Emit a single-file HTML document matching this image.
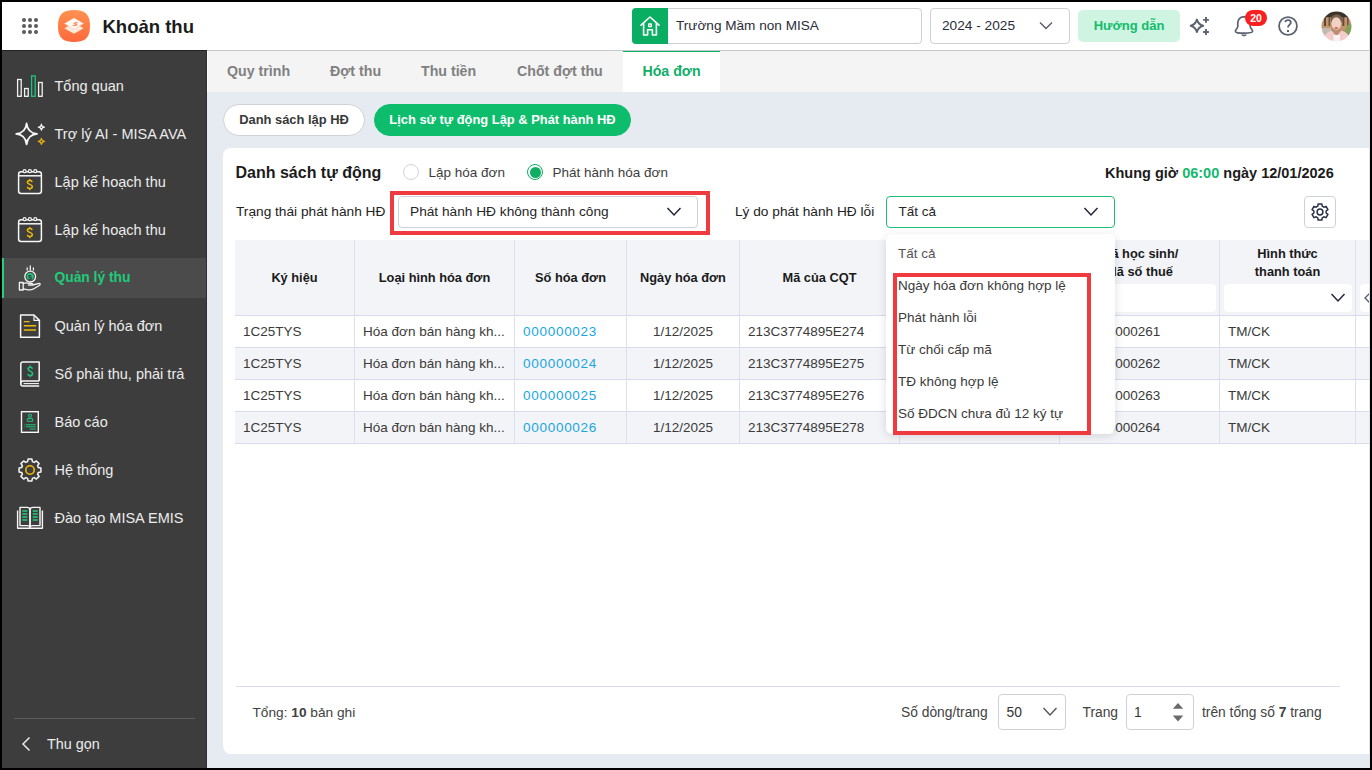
<!DOCTYPE html>
<html><head><meta charset="utf-8">
<style>
*{box-sizing:border-box;margin:0;padding:0}
html,body{width:1372px;height:770px;overflow:hidden;background:#000;font-family:"Liberation Sans",sans-serif;color:#222}
.abs{position:absolute}
#app{position:absolute;left:0;top:0;width:1372px;height:770px;background:#e6eaf1;overflow:hidden}
#frame{position:absolute;left:0;top:0;width:1372px;height:770px;border:2px solid #000;z-index:100}
/* header */
#hdr{position:absolute;left:0;top:0;width:1372px;height:51px;background:#fff;border-bottom:1px solid #c6cad0}
/* sidebar */
#side{position:absolute;left:0;top:50px;width:207px;height:720px;background:#3d3d3d;border-right:1px solid #2f2f2f;border-top:1px solid #232323}
.si{position:absolute;left:0;width:206px;height:40px;color:#ececec;font-size:14.5px;line-height:40px}
.si span{position:absolute;left:54.5px;top:0}
.si svg{position:absolute}
.si.act{background:#4b4b4b;color:#1fcb7a;font-weight:700;font-size:13.8px}
.si.act:before{content:"";position:absolute;left:2px;top:0;width:2px;height:40px;background:#1fd17f}
/* tabs */
#tabs{position:absolute;left:207px;top:51px;width:1165px;height:41px;background:#f4f4f4;border-left:1px solid #fff}
.tab{position:absolute;top:0;height:41px;line-height:41px;font-size:14.2px;font-weight:700;color:#808080}
.tab.act{background:#fff;color:#12ad68;border-top:1.5px solid #0aae62;line-height:39.5px}
.pill{position:absolute;top:104px;height:32px;border-radius:16px;font-size:12.9px;font-weight:700;line-height:30px;text-align:center}
#card{position:absolute;left:223px;top:148px;width:1170px;height:606px;background:#fff;border-radius:8px}
.txt{position:absolute;white-space:nowrap}

.t{position:absolute;white-space:nowrap}
.box{position:absolute;background:#fff;border:1px solid #cfd1d8;border-radius:4px}
.th{position:absolute;top:240px;height:75px;font-size:12.8px;font-weight:700;color:#1a1a1a;text-align:center;line-height:76px}
.vl{position:absolute;top:240px;width:1px;height:203px;background:#dcdfee}
.hl{position:absolute;left:235px;width:1140px;height:1px;background:#d8dbeb}
.row{position:absolute;left:235px;width:1140px;height:32px}
.c{position:absolute;height:32px;line-height:34px;font-size:13.5px;color:#3a3a3a;white-space:nowrap}
.dd{position:absolute;left:898px;font-size:13.5px;color:#3a3a3a;line-height:32px;height:32px;white-space:nowrap}
</style></head><body>
<div id="app">
  <div id="hdr">
    <!-- app grid -->
    <svg class="abs" style="left:22px;top:18px" width="16" height="16" viewBox="0 0 16 16" fill="#5a5a5a">
      <circle cx="2" cy="2" r="2"/><circle cx="8" cy="2" r="2"/><circle cx="14" cy="2" r="2"/>
      <circle cx="2" cy="8" r="2"/><circle cx="8" cy="8" r="2"/><circle cx="14" cy="8" r="2"/>
      <circle cx="2" cy="14" r="2"/><circle cx="8" cy="14" r="2"/><circle cx="14" cy="14" r="2"/>
    </svg>
    <!-- logo -->
    <svg class="abs" style="left:58px;top:10px" width="32" height="32" viewBox="0 0 32 32">
      <defs><linearGradient id="lg" x1="0" y1="0" x2="0" y2="1"><stop offset="0" stop-color="#ff9252"/><stop offset="1" stop-color="#ff6839"/></linearGradient></defs>
      <path d="M16 0C27.5 0 32 4.5 32 16S27.5 32 16 32 0 27.5 0 16 4.5 0 16 0Z" fill="url(#lg)"/>
      <path d="M16 12.6 L25.6 18.2 L16 23.8 L6.4 18.2Z" fill="#ffeadd"/>
      <path d="M16 8 L25.6 13.4 L16 18.8 L6.4 13.4Z" fill="#fffaf6"/>
      <path d="M6.4 13.6 L16 19.2 L25.6 13.6" fill="none" stroke="#ffd2b8" stroke-width="0.5"/>
      <text x="0" y="0" font-size="7.5" font-weight="700" font-family="Liberation Sans" fill="#ff7a3a" transform="translate(16.6 16.2) skewX(-25) scale(1.1 0.75)" text-anchor="middle">$</text>
    </svg>
    <div class="txt" style="left:102.5px;top:3px;line-height:48px;font-size:18.5px;font-weight:700;color:#1c1c1c">Khoản thu</div>
    <!-- school -->
    <div class="abs" style="left:632px;top:8px;width:290px;height:36px;border:1px solid #cfcfd4;border-radius:4px;background:#fff"></div>
    <div class="abs" style="left:632px;top:8px;width:36px;height:36px;background:#0aae62;border-radius:4px 0 0 4px"></div>
    <svg class="abs" style="left:636px;top:12px" width="28" height="28" viewBox="636 12 28 28" fill="none" stroke="#fff" stroke-width="1.6" stroke-linejoin="round" stroke-linecap="round">
      <path d="M641 25.2 L650 17 L659 25.2"/><path d="M643.6 23.2 V35 H647.6 V29.8 H652.4 V35 H656.4 V23.2"/><rect x="648.7" y="24" width="2.6" height="2.6" stroke-width="1.4"/>
    </svg>
    <div class="txt" style="left:676px;top:8px;line-height:36px;font-size:13.6px;color:#2b2d3a">Trường Mầm non MISA</div>
    <!-- year -->
    <div class="abs" style="left:930px;top:8px;width:140px;height:36px;border:1px solid #cfcfd4;border-radius:4px;background:#fff"></div>
    <div class="txt" style="left:942px;top:8px;line-height:36px;font-size:13.7px;color:#2b2d3a">2024 - 2025</div>
    <svg class="abs" style="left:1039px;top:21px" width="14" height="10" viewBox="0 0 14 10" fill="none" stroke="#555a66" stroke-width="1.4"><path d="M1 1.5 L7 7.5 L13 1.5"/></svg>
    <!-- guide -->
    <div class="abs" style="left:1078px;top:10px;width:102px;height:32px;border-radius:5px;background:#cff4e2;color:#10bd6a;font-weight:700;font-size:13px;line-height:32px;text-align:center">Hướng dẫn</div>
    <!-- sparkle -->
    <svg class="abs" style="left:1184px;top:10px" width="30" height="30" viewBox="1184 10 30 30" fill="none" stroke="#5c6370" stroke-width="2" stroke-linejoin="round" stroke-linecap="butt">
      <path d="M1196.9 19.6 Q1198.3 24.4 1203.1 25.8 Q1198.3 27.2 1196.9 32 Q1195.5 27.2 1190.7 25.8 Q1195.5 24.4 1196.9 19.6Z"/>
      <path d="M1206 17 V22.8 M1203.1 19.9 H1208.9 M1206 29.1 V34.9 M1203.1 32 H1208.9" stroke-width="1.9"/>
    </svg>
    <!-- bell -->
    <svg class="abs" style="left:1234px;top:16px" width="22" height="22" viewBox="0 0 22 22" fill="none" stroke="#5c6370" stroke-width="1.7" stroke-linejoin="round">
      <path d="M3.8 10.2 V7 C3.8 3 6.6 0.8 10 0.8 C13.4 0.8 16.2 3 16.2 7 V10.2 C16.2 12.3 18.6 13.6 18.6 15.3 C18.6 16.8 15.6 17.2 10 17.2 C4.4 17.2 1.4 16.8 1.4 15.3 C1.4 13.6 3.8 12.3 3.8 10.2Z"/>
      <path d="M7.6 18.9 H12.4 Q10 21.2 7.6 18.9Z" fill="#5c6370" stroke-width="0.8"/>
    </svg>
    <div class="abs" style="left:1245px;top:10px;width:22px;height:16px;border-radius:8px;background:#fb2020;color:#fff;font-size:10.5px;font-weight:700;line-height:16px;text-align:center">20</div>
    <!-- help -->
    <svg class="abs" style="left:1274px;top:12px" width="28" height="28" viewBox="1274 12 28 28" fill="none" stroke="#5c6370" stroke-width="1.8">
      <circle cx="1288" cy="26" r="8.95"/>
      <path d="M1285.2 22.2 C1285.4 20.8 1286.6 20.2 1288 20.2 C1289.6 20.2 1290.8 21.1 1290.8 22.5 C1290.8 24.6 1288 24.8 1288 27.6"/>
      <rect x="1287" y="30" width="2" height="2" fill="#5c6370" stroke="none"/>
    </svg>
    <!-- avatar -->
    <svg class="abs" style="left:1320.5px;top:10.5px" width="31" height="31" viewBox="0 0 31 31">
      <defs><clipPath id="av"><circle cx="15.5" cy="15.5" r="15"/></clipPath><filter id="bl" x="-20%" y="-20%" width="140%" height="140%"><feGaussianBlur stdDeviation="0.6"/></filter></defs>
      <g clip-path="url(#av)"><g filter="url(#bl)">
        <rect x="-3" y="-3" width="37" height="37" fill="#b89070"/>
        <rect x="-3" y="-3" width="37" height="9.5" fill="#3a302a"/>
        <rect x="-3" y="6.5" width="37" height="11" fill="#c4946c"/>
        <rect x="3" y="6" width="2" height="9" fill="#5a463a"/><rect x="7.5" y="6" width="1.6" height="9" fill="#6a5444"/>
        <rect x="21.5" y="6" width="1.8" height="9" fill="#5a463a"/><rect x="26" y="6" width="1.6" height="9" fill="#6a5444"/>
        <rect x="-3" y="17" width="13" height="14" fill="#c2bab0"/>
        <ellipse cx="29" cy="20" rx="4.5" ry="7" fill="#82a05a"/>
        <ellipse cx="15.5" cy="8.5" rx="6" ry="5" fill="#7a6050"/>
        <ellipse cx="15.3" cy="12.5" rx="4.8" ry="6.2" fill="#f0d2c4"/>
        <ellipse cx="15.3" cy="17" rx="1.8" ry="0.9" fill="#d8605c"/>
        <path d="M1 34 Q3 21 10.5 19.5 L15.5 25 L20.5 19.5 Q28.5 21 31 34Z" fill="#f4cccb"/>
        <rect x="12.5" y="24" width="6.5" height="9" fill="#f8f2f2"/>
      </g></g>
    </svg>
  </div>

  <div id="side">
    <!-- item tops relative: 15+48i -->
    <div class="si" style="top:15px">
      <svg style="left:14px;top:6px" width="32" height="28" viewBox="14 72 32 28" fill="none" stroke="#f2f2f2" stroke-width="1.3">
        <rect x="17.6" y="79.5" width="3.6" height="16.8"/><rect x="24.6" y="88.5" width="3.6" height="7.8"/>
        <rect x="31.6" y="75.9" width="3.6" height="20.4" stroke="#1fc47a"/><rect x="38.6" y="82.5" width="3.6" height="13.8"/>
      </svg><span>Tổng quan</span></div>
    <div class="si" style="top:63px">
      <svg style="left:12px;top:4px" width="36" height="32" viewBox="12 118 36 32" fill="none" stroke="#f7f7f7" stroke-width="1.8" stroke-linejoin="round">
        <path d="M26.6 123.5 Q27.6 132.9 37 133.9 Q27.6 134.9 26.6 144.3 Q25.6 134.9 16.2 133.9 Q25.6 132.9 26.6 123.5Z"/>
        <path d="M41.4 124.2 Q41.7 126.9 44.4 127.2 Q41.7 127.5 41.4 130.2 Q41.1 127.5 38.4 127.2 Q41.1 126.9 41.4 124.2Z" stroke-width="1.2"/>
        <path d="M41.4 138.3 Q41.7 141.1 44.5 141.4 Q41.7 141.7 41.4 144.5 Q41.1 141.7 38.3 141.4 Q41.1 141.1 41.4 138.3Z" stroke="#e6b012" stroke-width="1.2"/>
      </svg><span>Trợ lý AI - MISA AVA</span></div>
    <div class="si" style="top:111px">
      <svg style="left:14px;top:5px" width="32" height="32" viewBox="14 167 32 32" fill="none" stroke="#f7f7f7" stroke-width="1.5">
        <rect x="18.6" y="171.8" width="22.8" height="21.6" rx="2.5"/><path d="M18.6 175.8 H41.4"/>
        <circle cx="24.6" cy="171.2" r="1.5" fill="#3d3d3d" stroke-width="1.2"/><circle cx="29.9" cy="171.2" r="1.5" fill="#3d3d3d" stroke-width="1.2"/><circle cx="35.3" cy="171.2" r="1.5" fill="#3d3d3d" stroke-width="1.2"/>
        <path d="M29.8 179 V180.6 M29.8 188.6 V190.2 M32.2 182 C32 181 31.1 180.5 29.8 180.5 C28.4 180.5 27.4 181.2 27.4 182.4 C27.4 184.7 32.3 184.1 32.3 186.6 C32.3 187.9 31.2 188.6 29.8 188.6 C28.3 188.6 27.4 187.9 27.2 186.9" stroke="#f0b90b" stroke-width="1.5"/>
      </svg><span>Lập kế hoạch thu</span></div>
    <div class="si" style="top:159px">
      <svg style="left:14px;top:5px" width="32" height="32" viewBox="14 167 32 32" fill="none" stroke="#f7f7f7" stroke-width="1.5">
        <rect x="18.6" y="171.8" width="22.8" height="21.6" rx="2.5"/><path d="M18.6 175.8 H41.4"/>
        <circle cx="24.6" cy="171.2" r="1.5" fill="#3d3d3d" stroke-width="1.2"/><circle cx="29.9" cy="171.2" r="1.5" fill="#3d3d3d" stroke-width="1.2"/><circle cx="35.3" cy="171.2" r="1.5" fill="#3d3d3d" stroke-width="1.2"/>
        <path d="M29.8 179 V180.6 M29.8 188.6 V190.2 M32.2 182 C32 181 31.1 180.5 29.8 180.5 C28.4 180.5 27.4 181.2 27.4 182.4 C27.4 184.7 32.3 184.1 32.3 186.6 C32.3 187.9 31.2 188.6 29.8 188.6 C28.3 188.6 27.4 187.9 27.2 186.9" stroke="#f0b90b" stroke-width="1.5"/>
      </svg><span>Lập kế hoạch thu</span></div>
    <div class="si act" style="top:207px">
      <svg style="left:14px;top:4px" width="32" height="32" viewBox="14 262 32 32" fill="none" stroke="#f2f2f2" stroke-width="1.3" stroke-linecap="round" stroke-linejoin="round">
        <circle cx="30.2" cy="276.6" r="5.4"/><circle cx="30.2" cy="276.6" r="3.6" fill="#1fc47a" stroke="none"/>
        <text x="30.2" y="279.6" font-size="7.5" font-weight="700" font-family="Liberation Sans" text-anchor="middle" fill="#3a3a3a" stroke="none">$</text>
        <path d="M27.2 268 V270 M30.3 266 V270 M33.4 268 V270"/>
        <path d="M19.4 282.5 H23.2 V290 H19.4Z"/>
        <path d="M23.2 283.5 Q26 282.3 29 283.4 H31.5 Q33 283.6 32.6 285 H28.5 M32.6 285 L39.2 283.3 Q41 283.6 39.6 285.2 L33 289.2 Q31 290.2 28 289.8 L23.2 288.8"/>
      </svg><span>Quản lý thu</span></div>
    <div class="si" style="top:255px">
      <svg style="left:14px;top:4px" width="32" height="32" viewBox="14 310 32 32" fill="none" stroke="#f7f7f7" stroke-width="1.5" stroke-linejoin="round">
        <path d="M20.6 315 H34 L39.4 320.4 V337.3 H20.6Z"/><path d="M34 315 V320.4 H39.4" stroke-width="1.2"/>
        <path d="M23.8 321.6 H29.6 M23.8 325.8 H36 M23.8 330 H36" stroke="#f0b90b" stroke-width="1.4"/>
      </svg><span>Quản lý hóa đơn</span></div>
    <div class="si" style="top:303px">
      <svg style="left:14px;top:4px" width="32" height="32" viewBox="14 358 32 32" fill="none" stroke="#f7f7f7" stroke-width="1.5" stroke-linejoin="round">
        <path d="M39.2 381 V362 H23 Q20.8 362 20.8 364.2 V384 Q20.8 386 23 386 H39.2"/>
        <path d="M23 381 H39.2 M23 381 Q20.8 381 20.8 383.5" /><path d="M23.5 383.6 H39" stroke-width="1.1"/>
        <path d="M30.2 365.6 V367.2 M30.2 375.6 V377.2 M32.4 368.8 C32.2 367.8 31.4 367.2 30.2 367.2 C28.9 367.2 28 367.9 28 369.1 C28 371.3 32.5 370.9 32.5 373.4 C32.5 374.8 31.5 375.6 30.2 375.6 C28.8 375.6 28 374.9 27.8 373.9" stroke="#1fc47a" stroke-width="1.5"/>
      </svg><span>Sổ phải thu, phải trả</span></div>
    <div class="si" style="top:351px">
      <svg style="left:14px;top:4px" width="32" height="32" viewBox="14 406 32 32" fill="none" stroke="#f7f7f7" stroke-width="1.4">
        <rect x="21.5" y="411.7" width="16.8" height="20.6"/>
        <circle cx="30" cy="415.8" r="1.5" stroke="#1fc47a" stroke-width="1.1"/>
        <rect x="27.2" y="418.5" width="5.6" height="2.8" rx="1.4" stroke="#1fc47a" stroke-width="1.1"/>
        <path d="M24 424.8 H24.6 M26 424.8 H35.8 M24 426.8 H24.6 M26 426.8 H35.8 M29.5 429 H35.8" stroke="#1fc47a" stroke-width="1.1"/>
      </svg><span>Báo cáo</span></div>
    <div class="si" style="top:399px">
      <svg style="left:14px;top:4px" width="32" height="32" viewBox="14 454 32 32" fill="none" stroke="#f7f7f7" stroke-width="1.5" stroke-linejoin="round">
        <path d="M27.60 461.64 L28.07 459.07 L31.93 459.07 L32.40 461.64 L34.22 462.39 L36.37 460.91 L39.09 463.63 L37.61 465.78 L38.36 467.60 L40.93 468.07 L40.93 471.93 L38.36 472.40 L37.61 474.22 L39.09 476.37 L36.37 479.09 L34.22 477.61 L32.40 478.36 L31.93 480.93 L28.07 480.93 L27.60 478.36 L25.78 477.61 L23.63 479.09 L20.91 476.37 L22.39 474.22 L21.64 472.40 L19.07 471.93 L19.07 468.07 L21.64 467.60 L22.39 465.78 L20.91 463.63 L23.63 460.91 L25.78 462.39Z"/>
        <circle cx="30" cy="470" r="4.2" stroke="#f0b90b" stroke-width="1.6"/>
      </svg><span>Hệ thống</span></div>
    <div class="si" style="top:447px">
      <svg style="left:14px;top:4px" width="32" height="32" viewBox="14 502 32 32" fill="none" stroke="#f7f7f7" stroke-width="1.4" stroke-linejoin="round">
        <path d="M17.6 510.5 V528.2 H42.4 V510.5"/>
        <path d="M20 507.4 H27 Q30 507.4 30 510 V527.2 Q30 525.6 27 525.6 H20Z"/>
        <path d="M40 507.4 H33 Q30 507.4 30 510 V527.2 Q30 525.6 33 525.6 H40Z"/>
        <path d="M22.3 511 H27.3 M22.3 514 H27.3 M22.3 517 H27.3 M22.3 520 H27.3 M32.7 511 H37.7 M32.7 514 H37.7 M32.7 517 H37.7 M32.7 520 H37.7" stroke="#1fd17f" stroke-width="1.6"/>
      </svg><span>Đào tạo MISA EMIS</span></div>
    <div class="abs" style="left:14px;top:667px;width:181px;height:1px;background:#5c5c5c"></div>
    <svg class="abs" style="left:20px;top:685px" width="12" height="16" viewBox="0 0 12 16" fill="none" stroke="#eaeaea" stroke-width="1.5"><path d="M9.5 1.5 L3 8 L9.5 14.5"/></svg>
    <div class="txt" style="left:47px;top:677px;line-height:32px;font-size:14.4px;color:#ececec">Thu gọn</div>
  </div>
  <div id="tabs">
    <div class="tab" style="left:19px">Quy trình</div>
    <div class="tab" style="left:122px">Đợt thu</div>
    <div class="tab" style="left:213px">Thu tiền</div>
    <div class="tab" style="left:309px">Chốt đợt thu</div>
    <div class="tab act" style="left:415px;width:97px;text-align:center">Hóa đơn</div>
  </div>
  <div class="pill" style="left:223px;width:142px;background:#fff;border:1px solid #cfd2d8;color:#383838">Danh sách lập HĐ</div>
  <div class="pill" style="left:374px;width:257px;background:#0ebd6c;border:1px solid #0ebd6c;color:#fff">Lịch sử tự động Lập &amp; Phát hành HĐ</div>
  <div id="card"></div>
  <div class="t" style="left:235.5px;top:161px;line-height:24px;font-size:16px;font-weight:700;color:#1b1b1b">Danh sách tự động</div>
  <div class="abs" style="left:403px;top:164px;width:16px;height:16px;border-radius:50%;border:1px solid #d3d3de;background:#fff"></div>
  <div class="t" style="left:428.5px;top:161px;line-height:24px;font-size:13.5px;color:#3d3d3d">Lập hóa đơn</div>
  <div class="abs" style="left:527px;top:164px;width:16px;height:16px;border-radius:50%;border:1.3px solid #0fae64;background:#fff"></div>
  <div class="abs" style="left:529.5px;top:166.5px;width:11px;height:11px;border-radius:50%;background:#0fae64"></div>
  <div class="t" style="left:552.5px;top:161px;line-height:24px;font-size:13.5px;color:#3d3d3d">Phát hành hóa đơn</div>
  <div class="t" style="left:1105px;top:161px;line-height:24px;font-size:14.5px;font-weight:700;color:#1b1b1b">Khung giờ <span style="color:#14b86f">06:00</span> ngày 12/01/2026</div>

  <div class="t" style="left:236px;top:200px;line-height:24px;font-size:13.7px;color:#222">Trạng thái phát hành HĐ</div>
  <div class="box" style="left:398px;top:196px;width:300px;height:32px"></div>
  <div class="t" style="left:410px;top:200px;line-height:24px;font-size:13.7px;color:#262626">Phát hành HĐ không thành công</div>
  <svg class="abs" style="left:666px;top:206px" width="16" height="12" viewBox="0 0 16 12" fill="none" stroke="#23263b" stroke-width="1.5"><path d="M1.5 2 L8 9 L14.5 2"/></svg>
  <div class="abs" style="left:390px;top:191px;width:320px;height:44px;border:4px solid #ef3b3f"></div>

  <div class="t" style="left:735px;top:200px;line-height:24px;font-size:13.7px;color:#222">Lý do phát hành HĐ lỗi</div>
  <div class="box" style="left:886px;top:196px;width:229px;height:32px;border-color:#20bd74"></div>
  <div class="t" style="left:898.5px;top:200px;line-height:24px;font-size:13.5px;color:#262626">Tất cả</div>
  <svg class="abs" style="left:1083px;top:206px" width="16" height="12" viewBox="0 0 16 12" fill="none" stroke="#23263b" stroke-width="1.5"><path d="M1.5 2 L8 9 L14.5 2"/></svg>

  <div class="box" style="left:1304px;top:196px;width:32px;height:32px"></div>
  <svg class="abs" style="left:1306px;top:198px" width="28" height="28" viewBox="1306 198 28 28" fill="none" stroke="#2c3048" stroke-width="1.5" stroke-linejoin="round">
    <path d="M1317.78 206.21 L1318.13 203.91 L1321.87 203.91 L1322.22 206.21 L1323.90 207.18 L1326.07 206.34 L1327.94 209.57 L1326.12 211.03 L1326.12 212.97 L1327.94 214.43 L1326.07 217.66 L1323.90 216.82 L1322.22 217.79 L1321.87 220.09 L1318.13 220.09 L1317.78 217.79 L1316.10 216.82 L1313.93 217.66 L1312.06 214.43 L1313.88 212.97 L1313.88 211.03 L1312.06 209.57 L1313.93 206.34 L1316.10 207.18Z"/>
    <circle cx="1320" cy="212" r="2.9"/>
  </svg>

  <!-- table -->
  <div class="abs" style="left:235px;top:240px;width:1140px;height:75px;background:#f3f4f8"></div>
  <div class="abs" style="left:235px;top:347px;width:1140px;height:32px;background:#f3f4f8"></div>
  <div class="abs" style="left:235px;top:411px;width:1140px;height:32px;background:#f3f4f8"></div>
  <div class="hl" style="top:315px"></div>
  <div class="hl" style="top:347px"></div>
  <div class="hl" style="top:379px"></div>
  <div class="hl" style="top:411px"></div>
  <div class="hl" style="top:443px"></div>
  <div class="vl" style="left:354px"></div>
  <div class="vl" style="left:514px"></div>
  <div class="vl" style="left:626px"></div>
  <div class="vl" style="left:739px"></div>
  <div class="vl" style="left:899px"></div>
  <div class="vl" style="left:1059px"></div>
  <div class="vl" style="left:1219px"></div>
  <div class="vl" style="left:1355px"></div>

  <div class="th" style="left:235px;width:119px">Ký hiệu</div>
  <div class="th" style="left:355px;width:159px">Loại hình hóa đơn</div>
  <div class="th" style="left:515px;width:111px">Số hóa đơn</div>
  <div class="th" style="left:627px;width:112px">Ngày hóa đơn</div>
  <div class="th" style="left:740px;width:159px">Mã của CQT</div>
  <div class="th" style="left:900px;width:159px;line-height:18px;padding-top:2px">Tên học sinh/<br>Tên khách hàng</div>
  <div class="th" style="left:1060px;width:159px;line-height:18px;padding-top:5px">Mã học sinh/<br>Mã số thuế</div>
  <div class="th" style="left:1220px;width:135px;line-height:18px;padding-top:5px">Hình thức<br>thanh toán</div>
  <div class="abs" style="left:1063px;top:284px;width:153px;height:28px;background:#fff;border-radius:4px"></div>
  <div class="abs" style="left:1224px;top:284px;width:128px;height:28px;background:#fff;border-radius:4px"></div>
  <svg class="abs" style="left:1330px;top:292px" width="16" height="12" viewBox="0 0 16 12" fill="none" stroke="#23263b" stroke-width="1.5"><path d="M1.5 2 L8 9 L14.5 2"/></svg>
  <div class="abs" style="left:1360px;top:284px;width:40px;height:28px;background:#fff;border-radius:4px"></div>
  <svg class="abs" style="left:1363px;top:292px" width="8" height="12" viewBox="0 0 8 12" fill="none" stroke="#5a5d70" stroke-width="1.4"><path d="M7 1 L2 6 L7 11"/></svg>
  <div class="c" style="left:243px;top:315px">1C25TYS</div>
  <div class="c" style="left:363px;top:315px">Hóa đơn bán hàng kh...</div>
  <div class="c" style="left:523px;top:315px;color:#17a6e3;letter-spacing:0.72px">000000023</div>
  <div class="c" style="left:627px;width:112px;text-align:center;top:315px">1/12/2025</div>
  <div class="c" style="left:748px;top:315px">213C3774895E274</div>
  <div class="c" style="left:908px;top:315px">Nguyễn Văn An</div>
  <div class="c" style="left:1074px;top:315px">HS000000261</div>
  <div class="c" style="left:1228px;top:315px">TM/CK</div>
  <div class="c" style="left:243px;top:347px">1C25TYS</div>
  <div class="c" style="left:363px;top:347px">Hóa đơn bán hàng kh...</div>
  <div class="c" style="left:523px;top:347px;color:#17a6e3;letter-spacing:0.72px">000000024</div>
  <div class="c" style="left:627px;width:112px;text-align:center;top:347px">1/12/2025</div>
  <div class="c" style="left:748px;top:347px">213C3774895E275</div>
  <div class="c" style="left:908px;top:347px">Nguyễn Văn An</div>
  <div class="c" style="left:1074px;top:347px">HS000000262</div>
  <div class="c" style="left:1228px;top:347px">TM/CK</div>
  <div class="c" style="left:243px;top:379px">1C25TYS</div>
  <div class="c" style="left:363px;top:379px">Hóa đơn bán hàng kh...</div>
  <div class="c" style="left:523px;top:379px;color:#17a6e3;letter-spacing:0.72px">000000025</div>
  <div class="c" style="left:627px;width:112px;text-align:center;top:379px">1/12/2025</div>
  <div class="c" style="left:748px;top:379px">213C3774895E276</div>
  <div class="c" style="left:908px;top:379px">Nguyễn Văn An</div>
  <div class="c" style="left:1074px;top:379px">HS000000263</div>
  <div class="c" style="left:1228px;top:379px">TM/CK</div>
  <div class="c" style="left:243px;top:411px">1C25TYS</div>
  <div class="c" style="left:363px;top:411px">Hóa đơn bán hàng kh...</div>
  <div class="c" style="left:523px;top:411px;color:#17a6e3;letter-spacing:0.72px">000000026</div>
  <div class="c" style="left:627px;width:112px;text-align:center;top:411px">1/12/2025</div>
  <div class="c" style="left:748px;top:411px">213C3774895E278</div>
  <div class="c" style="left:908px;top:411px">Nguyễn Văn An</div>
  <div class="c" style="left:1074px;top:411px">HS000000264</div>
  <div class="c" style="left:1228px;top:411px">TM/CK</div>

  <!-- footer -->
  <div class="abs" style="left:236px;top:686px;width:1104px;height:1px;background:#d8dbeb"></div>
  <div class="t" style="left:252.5px;top:701px;line-height:24px;font-size:13.7px;color:#424242">Tổng: <b>10</b> bản ghi</div>
  <div class="t" style="left:901px;top:701px;line-height:24px;font-size:13.8px;color:#424242">Số dòng/trang</div>
  <div class="box" style="left:998px;top:694px;width:68px;height:36px"></div>
  <div class="t" style="left:1006.5px;top:701px;line-height:24px;font-size:13.8px;color:#333">50</div>
  <svg class="abs" style="left:1042px;top:706px" width="16" height="12" viewBox="0 0 16 12" fill="none" stroke="#555" stroke-width="1.4"><path d="M1.5 2 L8 9 L14.5 2"/></svg>
  <div class="t" style="left:1082.5px;top:701px;line-height:24px;font-size:13.8px;color:#424242">Trang</div>
  <div class="box" style="left:1126px;top:694px;width:68px;height:36px"></div>
  <div class="t" style="left:1134px;top:701px;line-height:24px;font-size:13.8px;color:#333">1</div>
  <svg class="abs" style="left:1172px;top:702px" width="12" height="21" viewBox="0 0 12 21" fill="#6a6a6a"><path d="M0.8 6.8 L6 1 L11.2 6.8Z M0.8 13.5 L6 19.5 L11.2 13.5Z"/></svg>
  <div class="t" style="left:1202px;top:701px;line-height:24px;font-size:13.8px;color:#424242">trên tổng số <b style="font-weight:700">7</b> trang</div>

  <!-- dropdown -->
  <div class="abs" style="left:886px;top:234px;width:229px;height:200px;background:#fff;border-radius:6px;box-shadow:0 2px 10px rgba(0,0,0,.13)"></div>
  <div class="dd" style="top:238px;color:#555">Tất cả</div>
  <div class="dd" style="top:270px">Ngày hóa đơn không hợp lệ</div>
  <div class="dd" style="top:302px">Phát hành lỗi</div>
  <div class="dd" style="top:334px">Từ chối cấp mã</div>
  <div class="dd" style="top:366px">TĐ không hợp lệ</div>
  <div class="dd" style="top:398px">Số ĐDCN chưa đủ 12 ký tự</div>
  <div class="abs" style="left:893px;top:273px;width:198px;height:162px;border:4px solid #ef3b3f"></div>

</div>
<div class="abs" style="left:1369px;top:0;width:1px;height:770px;background:#e4e4e8;z-index:99"></div>
<div id="frame"></div>
</body></html>
